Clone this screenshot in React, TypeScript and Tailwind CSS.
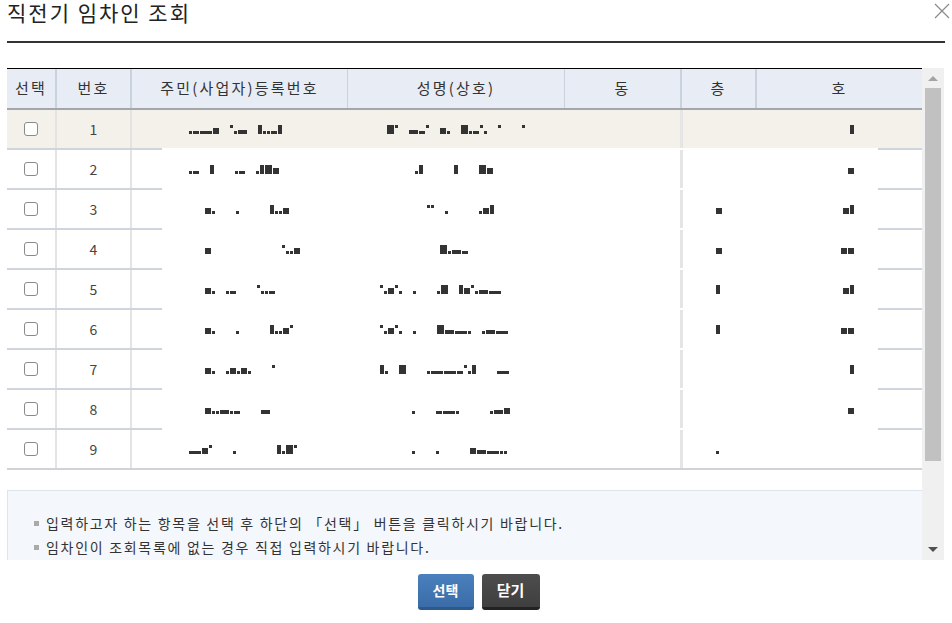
import React from "react";

const FONT = { fontFamily: '"Noto Sans CJK KR", "Noto Sans", sans-serif' };

// 가림 처리된 값 (redaction marks)
const GLYPH: Record<string, string> = {
  ".": "w-[3px] h-[3px] self-end",
  "`": "w-[3px] h-[3px] self-start",
  "-": "w-[6px] h-[3px] self-end",
  "=": "w-[9px] h-[4px] self-end",
  _: "w-[12px] h-[3px] self-end",
  "|": "w-[4px] h-[9px]",
  "#": "w-[6px] h-[6px] self-end",
  d: "w-[7px] h-[9px]",
};

function Redact({ p }: { p: string }) {
  return (
    <span className="inline-flex h-[9px] gap-[1px] align-middle">
      {p.split("").map((c, i) =>
        c === " " ? (
          <span key={i} className="w-[9px]" />
        ) : (
          <span key={i} className={`${GLYPH[c]} bg-[#333]`} />
        )
      )}
    </span>
  );
}

type Row = { no: number; id: string; idPad: string; name: string; namePad: string; floor?: string; ho?: string };

const rows: Row[] = [
  { no: 1, id: ".-_# `.= |..-|", idPad: "pl-[57px]", name: "d` =-` #. d.-`. `  `", namePad: "pl-[40px]", ho: "|" },
  { no: 2, id: ".- |  .- .|d#", idPad: "pl-[57px]", name: ".|   |  d#", namePad: "pl-[68px]", ho: "#" },
  { no: 3, id: "#.  .   |..#", idPad: "pl-[73px]", name: "`` .   .#|", namePad: "pl-[80px]", floor: "#", ho: "#|" },
  { no: 4, id: "#       `..#", idPad: "pl-[73px]", name: "d.=-", namePad: "pl-[93px]", floor: "#", ho: "##" },
  { no: 5, id: "#. .-  `..-", idPad: "pl-[73px]", name: "`.#`. .  .d |#`.=_", namePad: "pl-[33px]", floor: "|", ho: "#|" },
  { no: 6, id: "#.  .   |..#`", idPad: "pl-[73px]", name: "`.#`. .  d=_. .=_", namePad: "pl-[33px]", floor: "|", ho: "##" },
  { no: 7, id: "#. .#.#.  `", idPad: "pl-[73px]", name: "|. d  .__-`.|  _", namePad: "pl-[33px]", ho: "|" },
  { no: 8, id: "#..=.-  =", idPad: "pl-[73px]", name: ".  -_.   .=#", namePad: "pl-[65px]", ho: "#" },
  { no: 9, id: "_#`  .    |.d`", idPad: "pl-[57px]", name: ".  .   #=_..", namePad: "pl-[65px]", floor: "." },
];

function Checkbox() {
  return <span className="block h-[14px] w-[14px] rounded-[3px] border border-[#8a8a8a] bg-white" />;
}

export default function App() {
  return (
    <div className="relative h-[623px] w-[952px] overflow-hidden bg-white text-[#333]" style={FONT}>
      {/* 제목 */}
      <div className="mx-[7px] flex h-[43px] items-start justify-between border-b-2 border-[#333]">
        <h1 className="text-[21px] font-normal leading-[24px] tracking-[2px] text-[#222]">직전기 임차인 조회</h1>
        <button type="button" className="mr-[-6px] mt-[2px] text-[#8a8a8a]" aria-label="닫기">
          <svg width="18" height="18" viewBox="0 0 18 18" fill="none" stroke="currentColor" strokeWidth="1.2">
            <path d="M2 2l14 14M16 2L2 16" />
          </svg>
        </button>
      </div>

      {/* 목록 + 스크롤바 */}
      <div className="ml-[7px] mt-[25px] flex h-[492px] w-[937px]">
        <div className="h-full w-[915px] overflow-hidden">
          <div className="border-t border-black">
            <div className="flex h-[41px] items-center border-b-2 border-[#a3a7ad] bg-[#e8edf5] text-[15px] tracking-[2.2px] text-[#333]">
              <div className="flex h-full w-[48px] items-center justify-center">선택</div>
              <div className="flex h-full w-[75px] items-center justify-center border-l-2 border-[#c9d3de]">번호</div>
              <div className="flex h-full w-[217px] items-center justify-center border-l-2 border-[#c9d3de]">주민(사업자)등록번호</div>
              <div className="flex h-full w-[217px] items-center justify-center border-l border-[#c9d3de]">성명(상호)</div>
              <div className="flex h-full w-[116px] items-center justify-center border-l border-[#c9d3de]">동</div>
              <div className="flex h-full w-[75px] items-center justify-center border-l-2 border-[#c9d3de]">층</div>
              <div className="flex h-full flex-1 items-center justify-center border-l-2 border-[#c9d3de]">호</div>
            </div>

            {rows.map((r, i) => {
              const last = i === rows.length - 1;
              return (
                <div key={r.no} className="flex flex-col">
                  <div className={`flex h-[38px] items-center text-[14px] ${i === 0 ? "bg-[#f4f0ea]" : "bg-white"}`}>
                    <div className="flex h-full w-[48px] items-center justify-center">
                      <Checkbox />
                    </div>
                    <div className="flex h-full w-[75px] items-center justify-center border-l-2 border-[#e3e3e3] text-[#444]">
                      {r.no}
                    </div>
                    <div className={`flex h-full w-[217px] items-center border-l-2 border-[#e3e3e3] ${r.idPad}`}>
                      <Redact p={r.id} />
                    </div>
                    <div className={`flex h-full w-[217px] items-center ${r.namePad}`}>
                      <Redact p={r.name} />
                    </div>
                    <div className="h-full w-[116px]" />
                    <div className="flex h-full w-[75px] items-center border-l-[3px] border-[#e5e5e5] pl-[33px]">
                      {r.floor && <Redact p={r.floor} />}
                    </div>
                    <div className="flex h-full flex-1 items-center justify-end pr-[68px]">
                      {r.ho && <Redact p={r.ho} />}
                    </div>
                  </div>
                  {last ? (
                    <div className="h-[2px] bg-[#cfd3d8]" />
                  ) : (
                    <div className="flex h-[2px]">
                      <div className="w-[155px] bg-[#cfd5dc]" />
                      <div className="w-[716px] bg-white" />
                      <div className="flex-1 bg-[#cfd5dc]" />
                    </div>
                  )}
                </div>
              );
            })}
          </div>

          {/* 안내 */}
          <div className="mt-[20px] h-[120px] border-l border-t border-[#dde4ee] bg-[#f4f7fb] pl-[26px] pt-[20px] text-[14px] leading-[24px] tracking-[1.7px] text-[#333]">
            <p className="flex items-center gap-[7px]">
              <span className="h-[5px] w-[5px] bg-[#aaa]" />
              입력하고자 하는 항목을 선택 후 하단의 「선택」 버튼을 클릭하시기 바랍니다.
            </p>
            <p className="flex items-center gap-[7px]">
              <span className="h-[5px] w-[5px] bg-[#aaa]" />
              임차인이 조회목록에 없는 경우 직접 입력하시기 바랍니다.
            </p>
          </div>
        </div>

        {/* 스크롤바 */}
        <div className="flex h-full w-[22px] flex-col items-center bg-[#f0f0f0]">
          <div className="flex h-[20px] items-center justify-center">
            <span className="h-0 w-0 border-x-[5px] border-b-[5px] border-x-transparent border-b-[#a3a3a3]" />
          </div>
          <div className="h-[373px] w-[16px] bg-[#c1c1c1]" />
          <div className="flex-1" />
          <div className="flex h-[22px] items-center justify-center">
            <span className="h-0 w-0 border-x-[5px] border-t-[5px] border-x-transparent border-t-[#505050]" />
          </div>
        </div>
      </div>

      {/* 버튼 */}
      <div className="mt-[14px] flex justify-center gap-[8px] pl-[5px]">
        <button
          type="button"
          className="h-[36px] w-[56px] rounded-[3px] border-b-[3px] border-[#2c5a8c] bg-gradient-to-b from-[#4a80bd] to-[#3a6da8] text-[14px] font-bold text-white"
        >
          선택
        </button>
        <button
          type="button"
          className="h-[36px] w-[58px] rounded-[3px] border-b-[3px] border-[#222] bg-gradient-to-b from-[#4d4d4d] to-[#3f3f3f] text-[15px] font-bold text-white"
        >
          닫기
        </button>
      </div>
    </div>
  );
}
